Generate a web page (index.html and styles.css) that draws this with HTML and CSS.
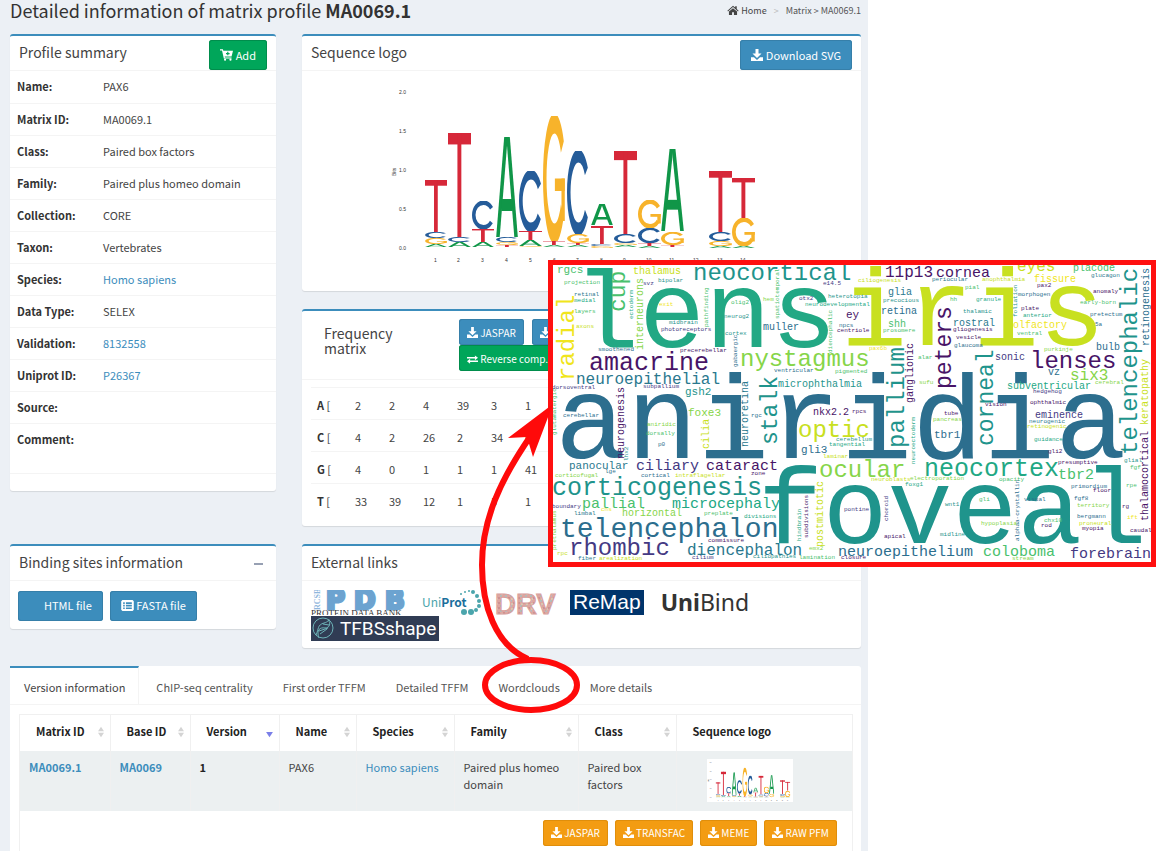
FILE: index.html
```html
<!DOCTYPE html>
<html lang="en">
<head>
<meta charset="utf-8">
<title>Matrix profile MA0069.1</title>
<link rel="stylesheet" href="styles.css">
</head>
<body>
<svg class="defs" aria-hidden="true">
  <symbol id="i-download" viewBox="0 0 16 16"><path fill="currentColor" d="M6 0h4v6h4l-6 6-6-6h4zM0 11h4l4 3.500 4-3.500h4v5H0z"/></symbol>
  <symbol id="i-cart" viewBox="0 0 18 16"><path fill="currentColor" fill-rule="evenodd" d="M0 0h4l.6 2H18l-2 8H6.500l.3 1.500H16V13H5.300L2.800 1.700H0zM10 3.500v1.700H8.300v1.600H10v1.700h1.600V6.800h1.700V5.200h-1.700V3.500z"/><circle cx="7" cy="14.500" r="1.500" fill="currentColor"/><circle cx="14.500" cy="14.500" r="1.500" fill="currentColor"/></symbol>
  <symbol id="i-home" viewBox="0 0 18 16"><path fill="currentColor" d="M9 1l3.500 3V2H15v4.200L18 9l-1 1.200L9 3.300 1 10.200 0 9zM9 5l6.500 5.500V16h-5v-4.500h-3V16h-5v-5.500z"/></symbol>
  <symbol id="i-swap" viewBox="0 0 16 12"><path fill="currentColor" d="M0 2.500h11.500V0L16 3.500 11.500 7V4.500H0zM16 9.500H4.500V12L0 8.500 4.500 5v2.500H16z"/></symbol>
  <symbol id="i-list" viewBox="0 0 16 14"><path fill="currentColor" fill-rule="evenodd" d="M1.500 0h13L16 1.500v11L14.500 14h-13L0 12.500v-11zM2.500 3v2h2V3zm0 3.200v2h2v-2zm0 3.200v2h2v-2zM6 3v2h7.500V3zm0 3.200v2h7.500v-2zm0 3.200v2h7.500v-2z"/></symbol>
  <symbol id="i-sort" viewBox="0 0 8 14"><path fill="#d4d4d4" d="M4 0l4 6H0zM4 14l4-6H0z"/></symbol>
  <symbol id="i-sorted" viewBox="0 0 8 14"><path fill="#7a7fe8" d="M4 13l4-6H0z"/></symbol>
  <symbol id="base-t" viewBox="0 0 100 100" preserveAspectRatio="none"><rect width="100" height="11" fill="#d62839"/><rect x="41" width="17" height="100" fill="#d62839"/></symbol>
  <symbol id="base-a" viewBox="0 0 100 100" preserveAspectRatio="none"><g stroke="#109648" stroke-width="15"><line x1="47" y1="-5" x2="7" y2="105"/><line x1="53" y1="-5" x2="93" y2="105"/><line x1="24" y1="68" x2="76" y2="68" stroke-width="12"/></g></symbol>
  <symbol id="base-c" viewBox="0 0 100 100" preserveAspectRatio="none"><ellipse cx="52" cy="50" rx="44" ry="44" fill="none" stroke="#255c99" stroke-width="16" pathLength="360" stroke-dasharray="290 70" stroke-dashoffset="-35"/></symbol>
  <symbol id="base-g" viewBox="0 0 100 100" preserveAspectRatio="none"><ellipse cx="52" cy="50" rx="44" ry="44" fill="none" stroke="#f7b32b" stroke-width="16" pathLength="360" stroke-dasharray="290 70" stroke-dashoffset="-35"/><rect x="54" y="50" width="45" height="10" fill="#f7b32b"/><rect x="84" y="50" width="15" height="34" fill="#f7b32b"/></symbol>
  <symbol id="stacks" viewBox="387 80 380 185">
    <g class="axis">
      <text x="399" y="94">2.0</text><text x="399" y="133">1.5</text><text x="399" y="172">1.0</text><text x="399" y="211">0.5</text><text x="399" y="250">0.0</text>
      <text transform="translate(396 176) rotate(-90)">Bits</text>
      <text x="434" y="262">1</text><text x="457" y="262">2</text><text x="481" y="262">3</text><text x="505" y="262">4</text><text x="529" y="262">5</text><text x="553" y="262">6</text><text x="576" y="262">7</text><text x="600" y="262">8</text><text x="623" y="262">9</text><text x="646" y="262">10</text><text x="669" y="262">11</text><text x="693" y="262">12</text><text x="717" y="262">13</text><text x="740" y="262">14</text>
    </g>
    <use href="#base-t" x="425" y="180" width="22" height="52"/><use href="#base-c" x="425" y="232" width="22" height="6"/><use href="#base-g" x="425" y="238" width="22" height="6"/><use href="#base-a" x="425" y="244" width="22" height="3"/>
    <use href="#base-t" x="448" y="133" width="23" height="104"/><use href="#base-c" x="448" y="237" width="23" height="5"/><use href="#base-a" x="448" y="242" width="23" height="5"/>
    <use href="#base-c" x="472" y="201" width="22" height="28"/><use href="#base-t" x="472" y="229" width="22" height="13"/><use href="#base-a" x="472" y="242" width="22" height="5"/>
    <use href="#base-a" x="496" y="137" width="22" height="100"/><use href="#base-c" x="496" y="237" width="22" height="5"/><use href="#base-g" x="496" y="242" width="22" height="3"/><use href="#base-t" x="496" y="245" width="22" height="2"/>
    <use href="#base-c" x="519" y="171" width="23" height="60"/><use href="#base-t" x="519" y="231" width="23" height="9"/><use href="#base-a" x="519" y="240" width="23" height="6"/><use href="#base-g" x="519" y="246" width="23" height="1"/>
    <use href="#base-g" x="543" y="116" width="22" height="125"/><use href="#base-t" x="543" y="241" width="22" height="4"/><use href="#base-a" x="543" y="245" width="22" height="2"/>
    <use href="#base-c" x="567" y="151" width="22" height="83"/><use href="#base-g" x="567" y="234" width="22" height="9"/><use href="#base-t" x="567" y="243" width="22" height="2"/><use href="#base-a" x="567" y="245" width="22" height="2"/>
    <use href="#base-a" x="591" y="204" width="22" height="21"/><use href="#base-t" x="591" y="226" width="22" height="18"/><use href="#base-c" x="591" y="244" width="22" height="2"/><use href="#base-g" x="591" y="246" width="22" height="2"/>
    <use href="#base-t" x="614" y="151" width="23" height="83"/><use href="#base-c" x="614" y="234" width="23" height="9"/><use href="#base-g" x="614" y="243" width="23" height="2"/><use href="#base-a" x="614" y="245" width="23" height="2"/>
    <use href="#base-g" x="638" y="200" width="23" height="28"/><use href="#base-c" x="638" y="228" width="23" height="15"/><use href="#base-t" x="638" y="243" width="23" height="3"/><use href="#base-a" x="638" y="246" width="23" height="2"/>
    <use href="#base-a" x="661" y="149" width="23" height="82"/><use href="#base-g" x="661" y="232" width="23" height="13"/><use href="#base-t" x="661" y="245" width="23" height="2"/>
    <use href="#base-t" x="709" y="171" width="23" height="61"/><use href="#base-c" x="709" y="232" width="23" height="9"/><use href="#base-g" x="709" y="241" width="23" height="5"/><use href="#base-a" x="709" y="246" width="23" height="2"/>
    <use href="#base-t" x="732" y="178" width="23" height="40"/><use href="#base-g" x="732" y="218" width="23" height="28"/><use href="#base-a" x="732" y="246" width="23" height="2"/>
  </symbol>
</svg>

<div class="page">
<main class="app">
  <header class="top">
    <h1>Detailed information of matrix profile <b>MA0069.1</b></h1>
    <nav class="crumbs" aria-label="Breadcrumb"><a href="#home"><svg class="ic" width="12" height="10"><use href="#i-home"/></svg> Home</a><span class="sep">&gt;</span><span>Matrix &gt; MA0069.1</span></nav>
  </header>

  <div class="boxes">
    <section class="box">
      <header class="box-head"><h2>Profile summary</h2><button class="btn green"><svg class="ic" width="13" height="12"><use href="#i-cart"/></svg> Add</button></header>
      <table class="profile">
        <tr><th scope="row">Name:</th><td>PAX6</td></tr>
        <tr><th scope="row">Matrix ID:</th><td>MA0069.1</td></tr>
        <tr><th scope="row">Class:</th><td>Paired box factors</td></tr>
        <tr><th scope="row">Family:</th><td>Paired plus homeo domain</td></tr>
        <tr><th scope="row">Collection:</th><td>CORE</td></tr>
        <tr><th scope="row">Taxon:</th><td>Vertebrates</td></tr>
        <tr><th scope="row">Species:</th><td><a href="#species">Homo sapiens</a></td></tr>
        <tr><th scope="row">Data Type:</th><td>SELEX</td></tr>
        <tr><th scope="row">Validation:</th><td><a href="#validation">8132558</a></td></tr>
        <tr><th scope="row">Uniprot ID:</th><td><a href="#uniprot">P26367</a></td></tr>
        <tr><th scope="row">Source:</th><td></td></tr>
        <tr><th scope="row">Comment:</th><td></td></tr>
      </table>
    </section>

    <div class="stack">
      <section class="box">
        <header class="box-head"><h2>Sequence logo</h2><button class="btn blue"><svg class="ic" width="12" height="12"><use href="#i-download"/></svg> Download SVG</button></header>
        <div class="logo-body"><svg class="seqlogo" viewBox="387 80 380 185" role="img" aria-label="Sequence logo"><use href="#stacks" x="387" y="80" width="380" height="185"/></svg></div>
      </section>
      <section class="box freq">
        <header class="freq-head"><h2>Frequency matrix</h2>
          <div class="freq-btns">
            <button class="btn small blue"><svg class="ic" width="11" height="11"><use href="#i-download"/></svg> JASPAR</button>
            <button class="btn small blue"><svg class="ic" width="11" height="11"><use href="#i-download"/></svg> TRANSFAC</button>
            <button class="btn small green"><svg class="ic" width="11" height="9"><use href="#i-swap"/></svg> Reverse comp.</button>
          </div>
        </header>
        <table class="matrix">
          <tr><th scope="row"><b>A</b> [</th><td>2</td><td>2</td><td>4</td><td>39</td><td>3</td><td>1</td></tr>
          <tr><th scope="row"><b>C</b> [</th><td>4</td><td>2</td><td>26</td><td>2</td><td>34</td><td>0</td></tr>
          <tr><th scope="row"><b>G</b> [</th><td>4</td><td>0</td><td>1</td><td>1</td><td>1</td><td>41</td></tr>
          <tr><th scope="row"><b>T</b> [</th><td>33</td><td>39</td><td>12</td><td>1</td><td>5</td><td>1</td></tr>
        </table>
      </section>
    </div>

    <section class="box short">
      <header class="box-head"><h2>Binding sites information</h2><button class="collapse" aria-label="Collapse"><svg width="9" height="2"><rect width="9" height="2" fill="#97a0b3"/></svg></button></header>
      <div class="files"><button class="btn blue blank">HTML file</button><button class="btn blue"><svg class="ic" width="13" height="11"><use href="#i-list"/></svg> FASTA file</button></div>
    </section>

    <section class="box">
      <header class="box-head"><h2>External links</h2></header>
      <div class="links">
        <a href="#pdb" aria-label="RCSB PDB"><svg width="98" height="25"><text class="pdb" x="15 43 74" y="19">PDB</text><text class="rcsb" transform="translate(9 20) rotate(-90)">RCSB</text><text class="bank" x="0" y="26">PROTEIN DATA BANK</text></svg></a>
        <a href="#uniprot"><svg width="60" height="25"><text class="uni" x="0" y="17">Uni<tspan class="prot">Prot</tspan></text><g fill="#4ba5ac"><circle cx="39" cy="4" r="1"/><circle cx="43" cy="2" r="1"/><circle cx="47" cy="1" r="1"/><circle cx="51" cy="2" r="2"/><circle cx="55" cy="6" r="2"/><circle cx="57" cy="11" r="2"/><circle cx="57" cy="16" r="2"/><circle cx="54" cy="20" r="2"/><circle cx="49" cy="22" r="3"/><circle cx="42" cy="22" r="3"/></g></svg></a>
        <a href="#drv"><svg width="62" height="25"><defs><pattern id="dots" width="5" height="5" patternUnits="userSpaceOnUse"><rect width="5" height="5" fill="#dfa6a0"/><circle cx="1" cy="1" r="1" fill="#a4c3c4"/><circle cx="4" cy="3" r="1" fill="#c98a8c"/><circle cx="2" cy="4" r="1" fill="#d8d3b8"/></pattern></defs><text class="drv" x="0" y="24" fill="url(#dots)">DRV</text></svg></a>
        <a class="remap" href="#remap">ReMap</a>
        <a class="unibind" href="#unibind"><b>Uni</b>Bind</a>
        <a class="tfbs" href="#tfbs"><svg width="23" height="23" fill="none" stroke="#6db3b8"><circle cx="12" cy="12" r="10"/><path d="M8 22C5 14 9 11 14 12c5 0 6-5 3-8M5 19c3-6 1-10 8-12 4-1 5-3 5-4M8 15l9-3M9 18l7-5M12 8l6 1" /></svg>TFBSshape</a>
      </div>
    </section>

    <section class="versions">
      <nav class="tabs"><a class="on" href="#version">Version information</a><a href="#chip">ChIP-seq centrality</a><a href="#first">First order TFFM</a><a href="#detailed">Detailed TFFM</a><a href="#wordclouds">Wordclouds</a><a href="#more">More details</a></nav>
      <div class="sheet">
        <table class="grid">
          <colgroup><col class="w90"><col class="w80"><col class="w89"><col class="w77"><col class="w98"><col class="w124"><col class="w98"><col></colgroup>
          <thead><tr>
            <th>Matrix ID<svg class="sort" width="6" height="12"><use href="#i-sort"/></svg></th>
            <th>Base ID<svg class="sort" width="6" height="12"><use href="#i-sort"/></svg></th>
            <th>Version<svg class="sort" width="7" height="12"><use href="#i-sorted"/></svg></th>
            <th>Name<svg class="sort" width="6" height="12"><use href="#i-sort"/></svg></th>
            <th>Species<svg class="sort" width="6" height="12"><use href="#i-sort"/></svg></th>
            <th>Family<svg class="sort" width="6" height="12"><use href="#i-sort"/></svg></th>
            <th>Class<svg class="sort" width="6" height="12"><use href="#i-sort"/></svg></th>
            <th>Sequence logo</th>
          </tr></thead>
          <tbody><tr>
            <td><a href="#m"><b>MA0069.1</b></a></td><td><a href="#b"><b>MA0069</b></a></td><td><b class="dark">1</b></td><td>PAX6</td><td><a href="#s">Homo sapiens</a></td><td>Paired plus homeo domain</td><td>Paired box factors</td>
            <td><svg class="thumb" viewBox="387 80 380 185" role="img" aria-label="Small sequence logo"><use href="#stacks" x="387" y="80" width="380" height="185"/></svg></td>
          </tr></tbody>
        </table>
        <div class="downloads">
          <button class="btn small orange"><svg class="ic" width="11" height="11"><use href="#i-download"/></svg> JASPAR</button>
          <button class="btn small orange"><svg class="ic" width="11" height="11"><use href="#i-download"/></svg> TRANSFAC</button>
          <button class="btn small orange"><svg class="ic" width="11" height="11"><use href="#i-download"/></svg> MEME</button>
          <button class="btn small orange"><svg class="ic" width="11" height="11"><use href="#i-download"/></svg> RAW PFM</button>
        </div>
      </div>
    </section>
  </div>
</main>

<figure class="cloud">
<svg viewBox="553 265 598 297" role="img" aria-label="Word cloud">
<text class="g s110" x="573" y="347">lens</text>
<text class="y s110" x="841" y="345">iris</text>
<text class="b s119" x="555" y="458">aniridia</text>
<text class="t s108" x="758" y="543">foveal</text>
<text class="l s11" x="557" y="273">rgcs</text>
<text class="l s6" x="564" y="284">projection</text>
<text class="d s6" x="574" y="296">retinal</text>
<text class="g s6" x="574" y="302">medial</text>
<text class="l s6" x="574" y="313">layers</text>
<text class="y s6" x="576" y="328">axons</text>
<text class="o s24" transform="translate(574 381) rotate(-90)">radial</text>
<text class="l s23" transform="translate(625 312) rotate(-90)">cup</text>
<text class="g s6" transform="translate(633 319) rotate(-90)">ectoderm</text>
<text class="m s10" transform="translate(643 350) rotate(-90)">interneurons</text>
<text class="y s10" x="633" y="274">thalamus</text>
<text class="v s6" x="643" y="285">svz</text>
<text class="t s6" x="658" y="282">bipolar</text>
<text class="t s24" x="693" y="280">neocortical</text>
<text class="o s6" x="659" y="306">exit</text>
<text class="t s6" x="669" y="324">midbrain</text>
<text class="v s6" x="661" y="331">photoreceptors</text>
<text class="l s6" transform="translate(708 327) rotate(-90)">pathfinding</text>
<text class="l s6" x="731" y="304">olig2</text>
<text class="t s6" x="724" y="318">neurog2</text>
<text class="t s6" x="725" y="335">cortex</text>
<text class="b s6" transform="translate(737 367) rotate(-90)">gabaergic</text>
<text class="b s6" x="598" y="351">smoothened</text>
<text class="p s6" x="680" y="352">precerebellar</text>
<text class="p s25" x="589" y="370">amacrine</text>
<text class="d s16" x="576" y="384">neuroepithelial</text>
<text class="v s6" x="643" y="388">subpallium</text>
<text class="v s6" x="552" y="389">dorsoventral</text>
<text class="t s11" x="685" y="395">gsh2</text>
<text class="m s11" x="688" y="416">foxe3</text>
<text class="p s10" transform="translate(624 459) rotate(-90)">neurogenesis</text>
<text class="l s6" transform="translate(556 435) rotate(-90)">glutamatergic</text>
<text class="b s6" x="563" y="417">cerebellar</text>
<text class="d s10" transform="translate(748 447) rotate(-90)">neuroretina</text>
<text class="m s6" x="647" y="426">aniridic</text>
<text class="l s6" x="646" y="435">dorsally</text>
<text class="y s10" transform="translate(709 449) rotate(-90)">cilia</text>
<text class="b s6" x="658" y="446">p0</text>
<text class="t s6" transform="translate(628 461) rotate(-90)">lhx2</text>
<text class="d s11" x="569" y="469">panocular</text>
<text class="b s6" x="605" y="473">lge</text>
<text class="v s15" x="636" y="470">ciliary</text>
<text class="p s15" x="706" y="470">cataract</text>
<text class="m s6" x="555" y="477">corticofugal</text>
<text class="b s6" x="641" y="477">cortical</text>
<text class="y s6" x="675" y="477">intraflagellar</text>
<text class="t s25" x="552" y="495">corticogenesis</text>
<text class="p s6" x="751" y="475">zone</text>
<text class="v s6" x="552" y="508">boundary</text>
<text class="l s15" x="582" y="508">pallial</text>
<text class="o s6" x="601" y="511">cns</text>
<text class="d s6" x="574" y="515">limbal</text>
<text class="g s15" x="672" y="508">microcephaly</text>
<text class="m s10" x="622" y="516">horizontal</text>
<text class="l s6" x="704" y="515">preplate</text>
<text class="g s6" x="744" y="518">divisions</text>
<text class="b s28" x="560" y="537">telencephalon</text>
<text class="v s24" x="569" y="555">rhombic</text>
<text class="m s6" transform="translate(556 550) rotate(-90)">prethalamus</text>
<text class="y s6" x="557" y="555">rpc</text>
<text class="d s6" x="578" y="560">fiber</text>
<text class="y s6" x="599" y="560">arealization</text>
<text class="v s6" x="692" y="559">cilium</text>
<text class="p s6" x="708" y="542">commissure</text>
<text class="d s16" x="687" y="555">diencephalon</text>
<text class="l s6" transform="translate(779 319) rotate(-90)">spatiotemporal</text>
<text class="v s6" x="823" y="285">e14.5</text>
<text class="m s6" x="763" y="301">hem</text>
<text class="v s6" x="799" y="300">otx2</text>
<text class="t s6" x="828" y="298">heterotopia</text>
<text class="g s6" x="805" y="306">neurodevelopmental</text>
<text class="p s11" x="846" y="318">ey</text>
<text class="b s6" x="839" y="327">npcs</text>
<text class="p s6" x="837" y="332">centriole</text>
<text class="b s10" x="763" y="330">muller</text>
<text class="l s6" transform="translate(832 353) rotate(-90)">diencephalic</text>
<text class="m s24" x="740" y="366">nystagmus</text>
<text class="b s6" x="774" y="372">ventricular</text>
<text class="l s6" x="835" y="373">pigmented</text>
<text class="t s10" x="778" y="387">microphthalmia</text>
<text class="o s6" x="869" y="350">pax6b</text>
<text class="y s6" x="858" y="282">ciliogenesis</text>
<text class="d s10" x="888" y="295">glia</text>
<text class="t s6" x="883" y="302">precocious</text>
<text class="b s10" x="881" y="314">retina</text>
<text class="l s10" x="888" y="327">shh</text>
<text class="l s6" x="883" y="332">prosomere</text>
<text class="p s16" x="885" y="277">11p13</text>
<text class="p s15" x="936" y="277">cornea</text>
<text class="d s6" x="932" y="281">periocular</text>
<text class="l s6" x="950" y="301">hh</text>
<text class="p s23" transform="translate(951 389) rotate(-90)">peters</text>
<text class="p s10" transform="translate(913 403) rotate(-90)">ganglionic</text>
<text class="l s6" x="918" y="359">alar</text>
<text class="m s6" x="919" y="384">sufu</text>
<text class="t s24" transform="translate(904 448) rotate(-90)">pallium</text>
<text class="p s10" x="813" y="415">nkx2.2</text>
<text class="p s6" x="852" y="413">rpcs</text>
<text class="t s23" transform="translate(777 445) rotate(-90)">stalk</text>
<text class="b s6" x="751" y="417">rgc</text>
<text class="y s24" x="798" y="437">optic</text>
<text class="t s6" x="836" y="441">cerebellum</text>
<text class="g s6" x="829" y="446">tangential</text>
<text class="b s11" x="801" y="453">gli3</text>
<text class="y s6" x="823" y="458">laminar</text>
<text class="g s6" transform="translate(915 464) rotate(-90)">neuroectoderm</text>
<text class="p s6" x="944" y="415">tube</text>
<text class="m s6" x="933" y="421">pancreas</text>
<text class="b s11" x="934" y="438">tbr1</text>
<text class="m s24" x="819" y="477">ocular</text>
<text class="g s25" x="924" y="476">neocortex</text>
<text class="y s6" x="871" y="481">neuroblasts</text>
<text class="m s6" x="910" y="480">electroporation</text>
<text class="g s6" x="905" y="486">foxg1</text>
<text class="y s10" transform="translate(823 547) rotate(-90)">postmitotic</text>
<text class="g s6" transform="translate(801 541) rotate(-90)">hindbrain</text>
<text class="p s6" transform="translate(808 538) rotate(-90)">subdivisions</text>
<text class="v s6" transform="translate(888 521) rotate(-90)">choroid</text>
<text class="v s6" x="844" y="511">pontine</text>
<text class="t s6" x="945" y="506">wnt1</text>
<text class="p s6" x="884" y="538">apical</text>
<text class="m s6" x="809" y="550">emx2</text>
<text class="t s6" x="940" y="536">midline</text>
<text class="b s15" x="838" y="556">neuroepithelium</text>
<text class="p s6" x="841" y="559">closure</text>
<text class="l s6" x="799" y="559">lamination</text>
<text class="t s6" x="753" y="558">ciliopathies</text>
<text class="y s16" x="1017" y="271">eyes</text>
<text class="l s10" x="1073" y="271">placode</text>
<text class="d s6" x="1091" y="277">glucagon</text>
<text class="y s6" x="982" y="281">anophthalmia</text>
<text class="o s10" x="1034" y="282">fissure</text>
<text class="l s6" x="965" y="289">pial</text>
<text class="p s6" x="1037" y="287">pax2</text>
<text class="b s6" x="1018" y="296">morphogen</text>
<text class="p s6" x="1093" y="293">anomaly</text>
<text class="t s6" transform="translate(1017 317) rotate(-90)">foliation</text>
<text class="g s6" x="976" y="301">granule</text>
<text class="l s6" x="1080" y="304">early-born</text>
<text class="p s6" x="1021" y="310">plate</text>
<text class="g s6" x="1023" y="317">anterior</text>
<text class="t s6" x="963" y="313">thalamic</text>
<text class="b s6" x="1090" y="316">pretectum</text>
<text class="d s10" x="953" y="326">rostral</text>
<text class="o s10" x="1013" y="328">olfactory</text>
<text class="b s6" x="1095" y="326">5a</text>
<text class="p s6" x="953" y="331">gliogenesis</text>
<text class="l s6" x="1017" y="335">ventral</text>
<text class="p s6" x="956" y="339">vesicle</text>
<text class="b s6" x="954" y="347">glaucoma</text>
<text class="m s6" x="1044" y="351">purkinje</text>
<text class="b s10" x="1096" y="350">bulb</text>
<text class="v s10" x="995" y="360">sonic</text>
<text class="p s24" x="1030" y="368">lenses</text>
<text class="t s23" transform="translate(993 446) rotate(-90)">corneal</text>
<text class="b s10" x="1048" y="375">vz</text>
<text class="m s16" x="1070" y="380">six3</text>
<text class="g s10" x="1007" y="389">subventricular</text>
<text class="m s6" x="1095" y="384">cerebral</text>
<text class="v s6" x="1033" y="393">hedgehog</text>
<text class="p s6" x="1030" y="404">ophthalmic</text>
<text class="p s6" x="985" y="406">vision</text>
<text class="v s10" x="1035" y="418">eminence</text>
<text class="t s24" transform="translate(1137 455) rotate(-90)">telencephalic</text>
<text class="b s10" transform="translate(1149 346) rotate(-90)">retinogenesis</text>
<text class="y s10" transform="translate(1148 425) rotate(-90)">keratopathy</text>
<text class="p s10" transform="translate(1148 521) rotate(-90)">thalamocortical</text>
<text class="d s6" x="1029" y="423">neurogenic</text>
<text class="y s6" x="1027" y="428">retinogenic</text>
<text class="g s6" x="1034" y="441">guidance</text>
<text class="p s6" x="1048" y="453">gli2</text>
<text class="p s6" x="1058" y="464">presumptive</text>
<text class="t s6" x="1124" y="462">glial</text>
<text class="l s6" x="1130" y="469">fgf</text>
<text class="l s15" x="1058" y="479">tbr2</text>
<text class="l s6" x="999" y="481">opacity</text>
<text class="b s6" x="1071" y="488">primordium</text>
<text class="p s6" x="1093" y="492">floor</text>
<text class="l s6" x="1126" y="487">rpe</text>
<text class="b s6" x="1024" y="501">visual</text>
<text class="l s6" x="979" y="501">gli</text>
<text class="b s6" x="1074" y="500">fgf8</text>
<text class="m s6" x="1077" y="507">territory</text>
<text class="p s6" x="1122" y="508">rg</text>
<text class="b s6" transform="translate(1019 541) rotate(-90)">alphaa-crystallin</text>
<text class="l s6" x="1044" y="522">chx10</text>
<text class="p s6" x="1041" y="527">rod</text>
<text class="m s6" x="981" y="525">hypoplasia</text>
<text class="b s6" x="1077" y="518">bergmann</text>
<text class="y s6" x="1079" y="525">proneural</text>
<text class="p s6" x="1082" y="530">myopia</text>
<text class="o s6" x="1127" y="519">ift</text>
<text class="p s6" x="1130" y="532">caudal</text>
<text class="l s15" x="983" y="556">coloboma</text>
<text class="v s15" x="1070" y="558">forebrain</text>
<text class="m s6" x="1012" y="560">stream</text>
</svg>
</figure>
<svg class="callout" viewBox="470 400 120 320" aria-hidden="true"><g fill="none" stroke="#ff0a0a" stroke-width="6"><path d="M528 659C495 645 482 605 482 565C482 520 500 480 532 434"/><ellipse cx="531" cy="685" rx="46" ry="25"/></g><path fill="#ff0a0a" d="M553 404L508 438L527 437L533 457Z"/></svg>
</div>
</body>
</html>
```
FILE: styles.css
```css
* { box-sizing: border-box; }
body { margin: 0; background: #fff; color: #444; font: 11px/17px "Noto Sans CJK SC", "Noto Sans", sans-serif; }
a { color: #3c8dbc; text-decoration: none; }
h1, h2 { margin: 0; font-weight: 400; }
button { font: inherit; border: 0; cursor: pointer; }
table { border-collapse: collapse; width: 100%; }
.defs { position: absolute; width: 0; height: 0; }
.ic { vertical-align: -1px; }

.page { position: relative; display: grid; grid-template-columns: 868fr 300fr; }
.app { background: #ecf0f5; padding: 0 7px 0 10px; }
.top { display: flex; justify-content: space-between; height: 34px; }
.top h1 { font-size: 18px; line-height: 20px; color: #333; }
.crumbs { display: flex; font-size: 9px; line-height: 22px; color: #555; }
.crumbs a { color: #444; }
.crumbs .sep { color: #bbb; padding: 0 7px; }

.boxes { display: grid; grid-template-columns: 266fr 559fr; gap: 18px 26px; }
.stack { display: flex; flex-direction: column; gap: 18px; }
.box { background: #fff; border-top: 2px solid #3c8dbc; border-radius: 3px; box-shadow: 0 1px 1px rgba(0, 0, 0, .1); }
.short { align-self: start; }
.boxes > .box:first-child { align-self: start; padding-bottom: 17px; }
.box-head { display: flex; justify-content: space-between; align-items: flex-start; height: 35px; padding: 4px 9px 0; border-bottom: 1px solid #f4f4f4; }
h2 { font-size: 14px; line-height: 24px; }

.btn { height: 30px; padding: 0 11px; border-radius: 3px; color: #fff; white-space: nowrap; line-height: 17px; }
.btn.small { height: 26px; padding: 0 8px; font-size: 10px; }
.blue { background: #3c8dbc; box-shadow: inset 0 0 0 1px #367fa9; }
.green { background: #00a65a; box-shadow: inset 0 0 0 1px #008d4c; }
.orange { background: #f39c12; box-shadow: inset 0 0 0 1px #e08e0b; }

.profile th, .profile td { height: 32px; padding: 0 6px; text-align: left; border-bottom: 1px solid #f4f4f4; }
.profile th { width: 87px; color: #333; padding-left: 7px; }
.profile tr:last-child > * { height: 50px; padding-bottom: 18px; }

.logo-body { height: 220px; padding: 9px 94px 0 85px; }
.seqlogo { display: block; width: 100%; }
.axis { font: 5px "Liberation Sans", sans-serif; fill: #333; }

.freq-head { display: flex; height: 69px; padding: 8px 22px 0; border-bottom: 1px solid #f4f4f4; }
.freq-head h2 { width: 135px; padding: 7px 50px 0 0; line-height: 15px; }
.freq-btns { display: flex; flex-wrap: wrap; align-content: flex-start; column-gap: 8px; width: 180px; }
.matrix { width: 541px; max-width: calc(100% - 18px); margin: 7px 9px 10px; table-layout: fixed; }
.matrix tr { height: 32px; border-top: 1px solid #f4f4f4; }
.matrix th, .matrix td { padding: 4px 0 0 0; text-align: left; font-weight: 400; width: 34px; }
.matrix th { padding-left: 6px; width: 44px; color: #333; }
.matrix td:last-child { width: auto; }

.collapse { background: none; padding: 0 4px; line-height: 20px; }
.files { display: flex; gap: 7px; padding: 10px 8px 8px; }
.blank { padding-left: 26px; }
.links { display: flex; flex-wrap: wrap; align-content: flex-start; padding: 9px 9px 7px; column-gap: 13px; }
.links a { display: block; height: 25px; margin-bottom: 1px; overflow: hidden; }
.pdb { font: bold 26px "DejaVu Sans", sans-serif; fill: #6ca3d0; stroke: #6ca3d0; stroke-width: 3px; }
.rcsb { font: bold 8px "Liberation Serif", serif; fill: #8fb6dc; }
.bank { font: 9px "Liberation Serif", serif; fill: #333; }
.uni { font: 12px "Noto Sans CJK SC", sans-serif; fill: #4ba5ac; }
.prot { font-weight: bold; fill: #1b6f9c; }
.drv { font: bold 29px "Liberation Sans", sans-serif; stroke: #d8a09c; stroke-width: 1px; }
.links .remap { background: #00346b; color: #fff; font: 21px/24px "Liberation Sans", sans-serif; padding: 0 3px; }
.links .unibind { color: #333; font: 23px/25px "Noto Sans", sans-serif; padding-left: 4px; margin-right: 60px; }
.links .tfbs { display: flex; gap: 6px; background: #303c54; color: #fff; font: 19px/25px Roboto, sans-serif; padding-right: 3px; margin: 0; }

.versions { grid-column: 1 / -1; background: #fff; border-radius: 3px 3px 0 0; }
.tabs { display: flex; border-bottom: 1px solid #f4f4f4; height: 39px; }
.tabs a { color: #555; padding: 10px 13px 0 14px; margin-right: 3px; border-top: 2px solid transparent; line-height: 18px; }
.tabs .on { border-top-color: #3c8dbc; border-right: 1px solid #f4f4f4; color: #444; }
.sheet { margin: 9px 8px 0 9px; border: 1px solid #f0f0f0; border-bottom: 0; }
.grid { table-layout: fixed; }
.grid th, .grid td { border-right: 1px solid #f0f0f0; text-align: left; vertical-align: top; }
.grid th:last-child, .grid td:last-child { border-right: 0; }
.grid th { height: 36px; padding: 8px 0 0 16px; color: #222; position: relative; }
.grid td { height: 60px; padding: 8px 9px 0; background: #ecf0f1; }
.sort { position: absolute; right: 6px; top: 11px; }
.dark { color: #222; }
.w90 { width: 90px; } .w80 { width: 80px; } .w89 { width: 89px; } .w77 { width: 77px; } .w98 { width: 98px; } .w124 { width: 124px; }
.thumb { display: block; width: 86px; height: 43px; background: #fff; margin-left: 21px; }
.downloads { display: flex; justify-content: flex-end; gap: 7px; padding: 9px 15px 5px; }

.cloud { position: absolute; left: 548px; top: 260px; width: 608px; height: 307px; margin: 0; border: 5px solid #ff1010; background: #fff; }
.cloud svg { display: block; width: 100%; height: 100%; font-family: "Liberation Mono", monospace; }
.callout { position: absolute; left: 470px; top: 400px; width: 120px; height: 320px; pointer-events: none; }
.s6 { font-size: 6px; } .s10 { font-size: 10px; } .s11 { font-size: 11px; } .s15 { font-size: 15px; } .s16 { font-size: 16px; }
.s23 { font-size: 23px; } .s24 { font-size: 24px; } .s25 { font-size: 25px; } .s28 { font-size: 28px; }
.s108 { font-size: 108px; } .s110 { font-size: 110px; } .s119 { font-size: 119px; }
.p { fill: #481467; } .v { fill: #443983; } .b { fill: #2c6e8e; } .d { fill: #2a788e; } .t { fill: #1f948c; }
.g { fill: #22a884; } .l { fill: #4ac16d; } .m { fill: #86d549; } .y { fill: #c8e020; } .o { fill: #f0e51c; }
```
